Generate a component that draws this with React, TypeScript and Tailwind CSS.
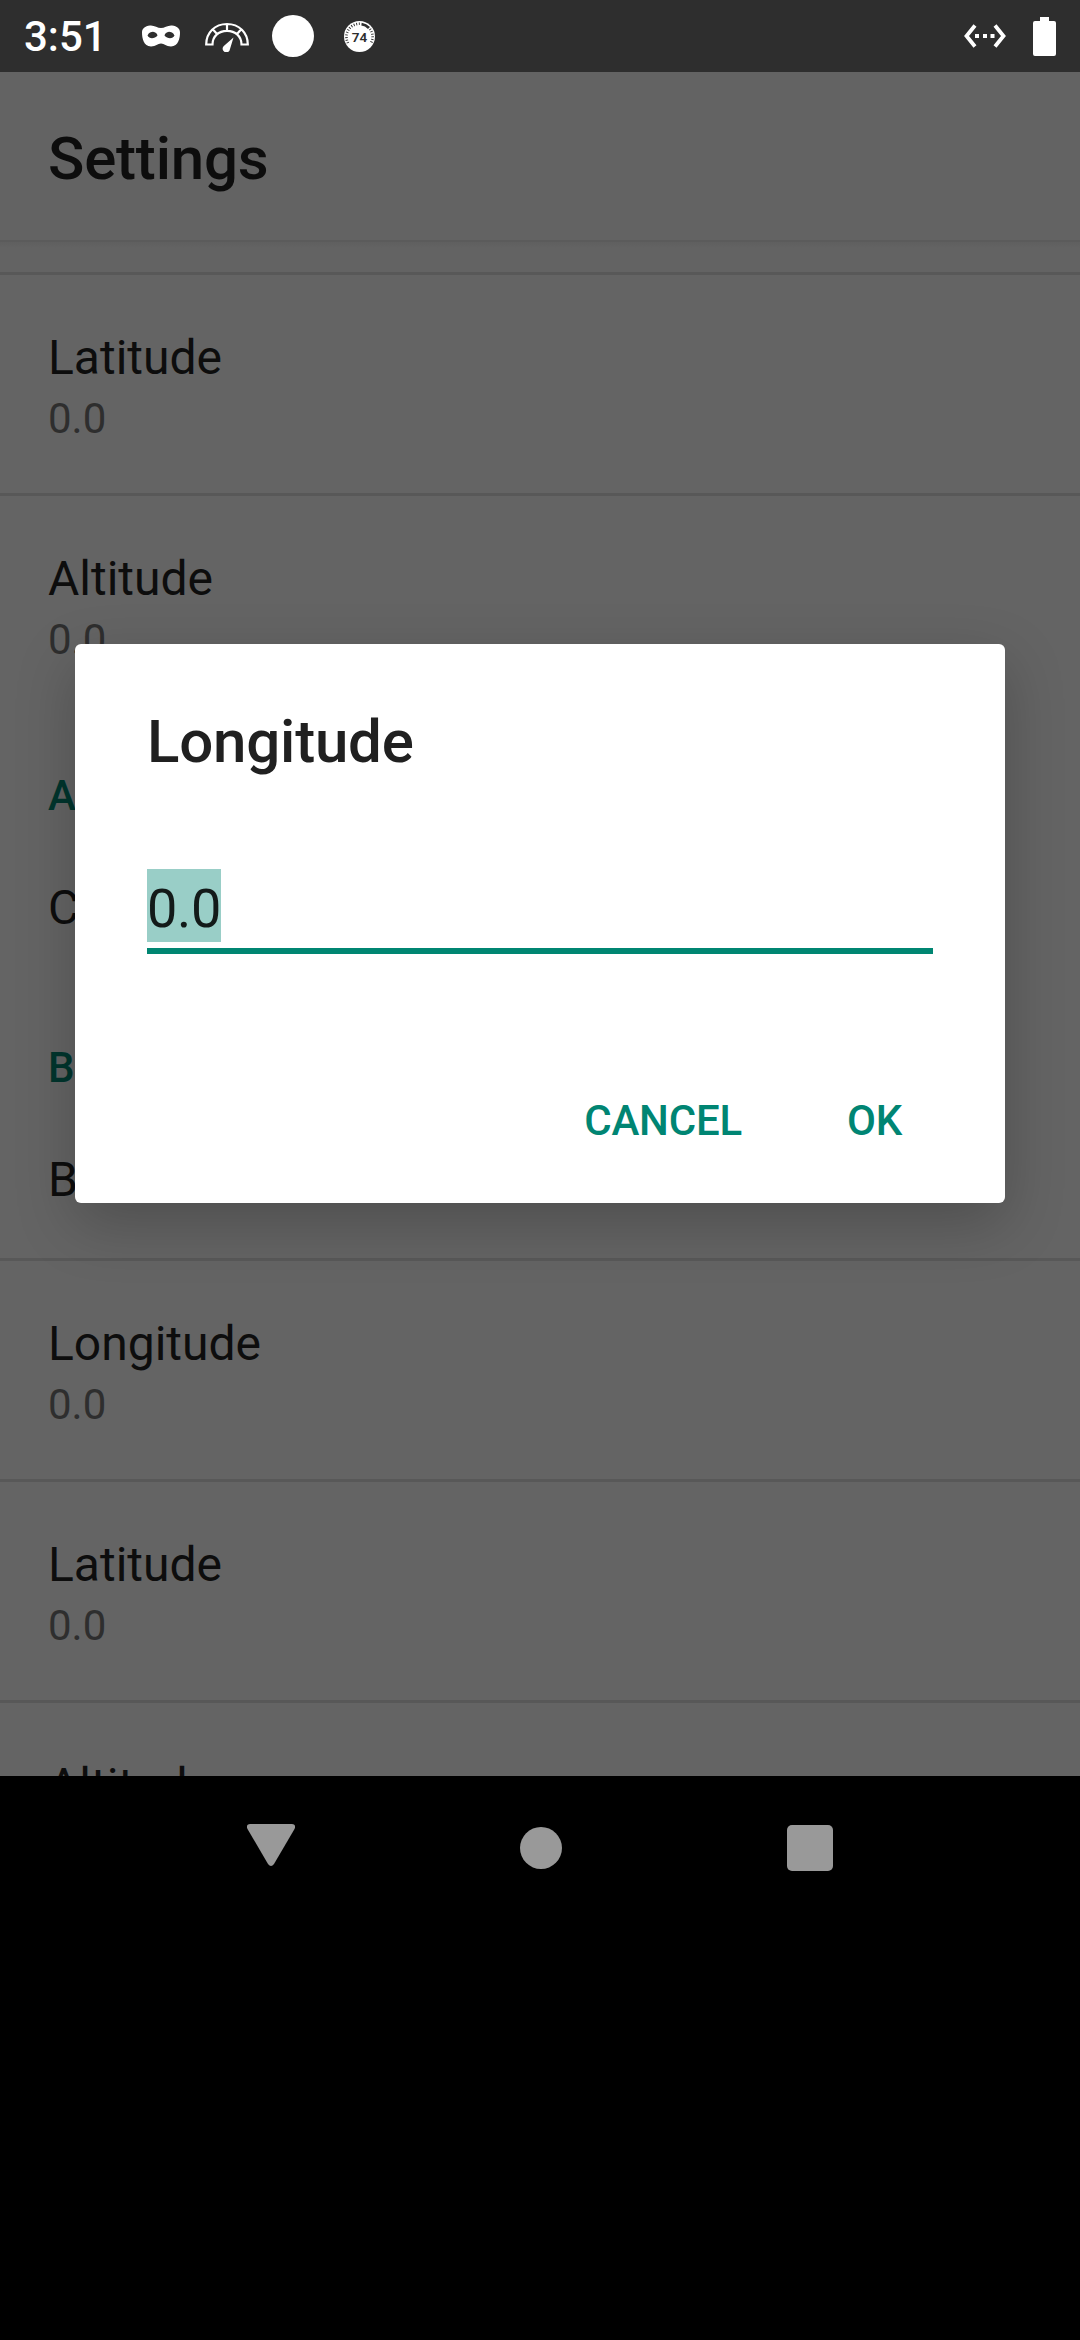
import type { ReactNode } from 'react';

function StatusBar() {
  return (
    <header className="flex h-[72px] w-full shrink-0 items-center bg-[#2e2e2e] text-white">
      <span className="ml-[24px] w-[118px] pt-[2px] text-[42px] leading-[70px] font-medium">3:51</span>
      <svg className="h-[24px] w-[38px]" viewBox="0 0 38 24">
        <path
          fill="#fff"
          fillRule="evenodd"
          d="M8 1.500C12 1 15.500 4 19 4S26 1 30 1.500C35 2 38 4.500 38 8.500C38 14 36.500 22.500 29 22.500C24 22.500 22.500 19.500 19 19.500S14 22.500 9 22.500C1.500 22.500 0 14 0 8.500C0 4.500 3 2 8 1.500ZM5.500 11.500C7 8.500 9 7.800 11 7.800C13.500 8 15 9.500 15.500 11.500C14 13.500 12 14.200 10 14.200C8 14.200 6.500 13.500 5.500 11.500ZM32.500 11.500C31 8.500 29 7.800 27 7.800C24.500 8 23 9.500 22.500 11.500C24 13.500 26 14.200 28 14.200C30 14.200 31.500 13.500 32.500 11.500Z"
        />
      </svg>
      <svg className="mt-[2px] ml-[25px] h-[30px] w-[44px]" viewBox="0 0 44 30" fill="none">
        <path
          stroke="#fff"
          strokeWidth="2.2"
          d="M1.200 22.500C1.200 10.500 10 2 22 2S42.800 10.500 42.800 22.500H36.500C36.500 14.500 30.500 8.800 22 8.800S7.500 14.500 7.500 22.500ZM22 2V9M8 7.500L12 12M36 7.500L32 12"
        />
        <path fill="#fff" d="M28.500 15.500L25 27A3.700 3.700 0 1 1 18.800 24Z" />
      </svg>
      <span className="ml-[23px] size-[42px] rounded-full bg-white" />
      <svg className="mt-[1px] ml-[30px] size-[31px]" viewBox="0 0 31 31">
        <circle cx="15.500" cy="15.500" r="15.500" fill="#fff" />
        <path d="M4 22A13 13 0 0 1 16 2.800" fill="none" stroke="#2e2e2e" strokeWidth="2.600" strokeDasharray="0.9 1.700" />
        <path d="M17.500 3.200A13 13 0 0 1 25 7" fill="none" stroke="#2e2e2e" strokeWidth="2.800" />
        <path d="M26 8A13 13 0 0 1 27 22" fill="none" stroke="#2e2e2e" strokeWidth="2.600" strokeDasharray="0.9 1.700" />
        <text x="15.500" y="20.500" textAnchor="middle" fontFamily="Roboto, sans-serif" fontSize="13.500" fontWeight="600" fill="#2e2e2e">
          74
        </text>
      </svg>
      <svg className="ml-auto h-[26px] w-[42px]" viewBox="0 0 42 26">
        <path
          d="M11 2.500L2.500 13L11 23.500M31 2.500L39.500 13L31 23.500"
          fill="none"
          stroke="#fff"
          strokeWidth="3.800"
        />
        <path d="M11 11h4v4h-4zM19 11h4v4h-4zM26.500 11h4v4h-4z" fill="#fff" />
      </svg>
      <svg className="mr-[24px] ml-[27px] h-[39px] w-[23px]" viewBox="0 0 23 39">
        <path
          fill="#fff"
          d="M7 0H16V4H21Q23 4 23 6V37Q23 39 21 39H2Q0 39 0 37V6Q0 4 2 4H7Z"
        />
      </svg>
    </header>
  );
}

function Preference({ title, summary }: { title: string; summary: string }) {
  return (
    <div className="h-[221px] shrink-0 border-t-[3px] border-[#585858] px-[48px] pt-[51px]">
      <div className="text-[48px] leading-[64px] text-[#0d0d0d]">{title}</div>
      <div className="mt-px text-[42px] leading-[56px] text-[#2e2e2e]">{summary}</div>
    </div>
  );
}

function Category({ title, item }: { title: string; item: string }) {
  return (
    <section className="h-[272px] shrink-0 px-[48px] pt-[54px]">
      <h2 className="text-[42px] leading-[56px] font-medium text-[#00352d]">{title}</h2>
      <div className="mt-[52px] text-[48px] leading-[64px] text-[#0d0d0d]">{item}</div>
    </section>
  );
}

function DialogButton({ children }: { children: ReactNode }) {
  return (
    <button className="h-[108px] px-[24px] text-[42px] leading-[56px] font-medium tracking-[-0.2px] text-[#008573]">
      {children}
    </button>
  );
}

function EditDialog() {
  return (
    <div
      role="dialog"
      className="absolute top-[644px] left-[75px] flex h-[559px] w-[930px] flex-col rounded-[6px] bg-white px-[72px] shadow-[0_20px_60px_rgba(0,0,0,0.22)]"
    >
      <h2 className="mt-[58px] text-[60px] leading-[80px] font-medium tracking-[-0.2px] text-[#202020]">Longitude</h2>
      <div className="mt-[87px] h-[85px] border-b-[6px] border-[#008672]">
        <span className="inline-block h-[73px] bg-[#99cec7] text-[54px] leading-[80px] tracking-[-0.25px] text-[#131a19]">
          0.0
        </span>
      </div>
      <div className="mt-[113px] mr-[7px] flex justify-end gap-[57px]">
        <DialogButton>CANCEL</DialogButton>
        <DialogButton>OK</DialogButton>
      </div>
    </div>
  );
}

function NavigationBar() {
  return (
    <nav className="flex h-[144px] shrink-0 items-center justify-center gap-[225px] bg-black">
      <svg className="-mt-[6px] h-[42px] w-[48px]" viewBox="0 0 48 42">
        <path
          fill="#999"
          d="M3 0H45Q49.500 0.500 47.500 5L27 40Q24 44 21 40L0.500 5Q-1.500 0.500 3 0Z"
        />
      </svg>
      <svg className="size-[42px]" viewBox="0 0 42 42">
        <circle cx="21" cy="21" r="21" fill="#999" />
      </svg>
      <span className="size-[46px] rounded-[5px] bg-[#999]" />
    </nav>
  );
}

export default function App() {
  return (
    <div className="relative flex h-[2340px] w-[1080px] flex-col overflow-hidden bg-black font-['Roboto',sans-serif]">
      <StatusBar />
      <div className="flex h-[168px] shrink-0 items-center bg-[#636363] px-[48px] pt-[5px]">
        <h1 className="text-[60px] leading-[80px] font-medium tracking-[-0.2px] text-[#0d0d0d]">Settings</h1>
      </div>
      <main className="flex h-[1536px] shrink-0 flex-col overflow-hidden bg-[#646464]">
        <div className="h-[32px] shrink-0 border-t-2 border-[#5b5b5b] bg-linear-to-b from-[#5f5f5f] to-[#636363] to-20%" />
        <Preference title="Latitude" summary="0.0" />
        <Preference title="Altitude" summary="0.0" />
        <Category title="A" item="C" />
        <Category title="B" item="B" />
        <Preference title="Longitude" summary="0.0" />
        <Preference title="Latitude" summary="0.0" />
        <Preference title="Altitude" summary="0.0" />
      </main>
      <NavigationBar />
      <EditDialog />
    </div>
  );
}
